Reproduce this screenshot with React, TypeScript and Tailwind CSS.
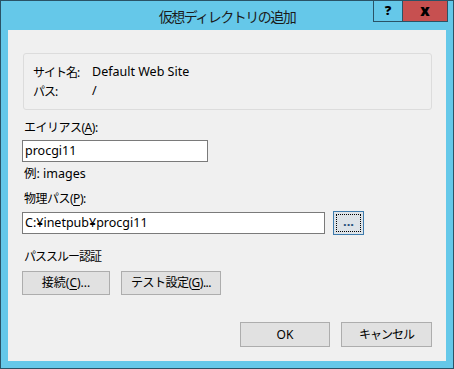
import React from 'react';

const FONT = { fontFamily: '"Noto Sans", "Noto Sans CJK JP", sans-serif' };

const Mn: React.FC<{ c: string }> = ({ c }) => <span className="underline underline-offset-2">{c}</span>;

const WinButton: React.FC<{ className?: string; children: React.ReactNode }> = ({ className = '', children }) => (
    <button className={`h-[24px] bg-[#e1e1e1] border border-[#adadad] text-[12px] leading-none text-black flex items-center justify-center ${className}`}>
        {children}
    </button>
);

const App: React.FC = () => {
    return (
        <div className="w-[454px] h-[369px] bg-[#65c8e9] border border-[#2a5366] flex flex-col relative text-black" style={FONT}>
            {/* title bar */}
            <div className="h-[29px] flex items-center justify-center">
                <span className="text-[14px] tracking-[-1.5px] text-[#1b1b1b] pt-[1px]">仮想ディレクトリの追加</span>
            </div>
            <div className="absolute top-[-1px] right-[5px] flex h-[22px]">
                <div className="w-[29px] border border-[#2a5366] border-r-0 flex items-center justify-center text-[13px] font-black">?</div>
                <div className="w-[46px] border border-[#2a5366] bg-[#c75050] flex items-center justify-center text-[15px] font-black leading-none pb-[2px]">x</div>
            </div>

            {/* client area */}
            <div className="mx-[7px] h-[331px] bg-[#f0f0f0] pt-[23px] px-[14px] text-[12.5px]">
                <div className="ml-[1px] h-[57px] border border-[#dcdcdc] rounded-[3px] px-[9px] pt-[9px]">
                    <div className="flex h-[19px] items-center">
                        <span className="w-[59px] text-[12px] tracking-[-1px]">サイト名:</span>
                        <span>Default Web Site</span>
                    </div>
                    <div className="flex h-[19px] items-center">
                        <span className="w-[59px] text-[12px] tracking-[-1px]">パス:</span>
                        <span>/</span>
                    </div>
                </div>

                <div className="mt-[10px] h-[16px] flex items-center px-[2px] text-[12px] tracking-[-0.5px]">
                    <span>エイリアス(<Mn c="A" />):</span>
                </div>
                <div className="mt-[4px] w-[186px] h-[22px] bg-white border border-[#7a7a7a] flex items-center px-[2px]">
                    procgi11
                </div>
                <div className="mt-[4px] h-[16px] flex items-center px-[2px]">例: images</div>

                <div className="mt-[9px] h-[16px] flex items-center px-[2px] text-[12px] tracking-[-0.5px]">
                    <span>物理パス(<Mn c="P" />):</span>
                </div>
                <div className="mt-[4px] h-[24px] flex items-center gap-[8px]">
                    <div className="w-[303px] h-[22px] bg-white border border-[#7a7a7a] flex items-center px-[2px]">
                        C:¥inetpub¥procgi11
                    </div>
                    <button className="w-[31px] h-[24px] bg-[#dde3e8] border border-[#3d7bad] p-[2px]">
                        <div className="w-full h-full border border-dotted border-black flex items-center justify-center text-[13px] font-bold leading-none text-[#1f4e79] pb-[3px]">
                            ...
                        </div>
                    </button>
                </div>

                <div className="mt-[14px] h-[16px] flex items-center px-[2px] text-[12px] tracking-[-1px]">パススルー認証</div>
                <div className="mt-[6px] flex gap-[11px]">
                    <WinButton className="w-[88px]"><span>接続(<Mn c="C" />)...</span></WinButton>
                    <WinButton className="w-[100px]"><span className="tracking-[-0.5px]">テスト設定(<Mn c="G" />)...</span></WinButton>
                </div>

                <div className="mt-[27px] flex justify-end gap-[11px]">
                    <WinButton className="w-[90px] h-[25px]">OK</WinButton>
                    <WinButton className="w-[91px] h-[25px]"><span className="tracking-[-1px]">キャンセル</span></WinButton>
                </div>
            </div>
        </div>
    );
};

export default App;
